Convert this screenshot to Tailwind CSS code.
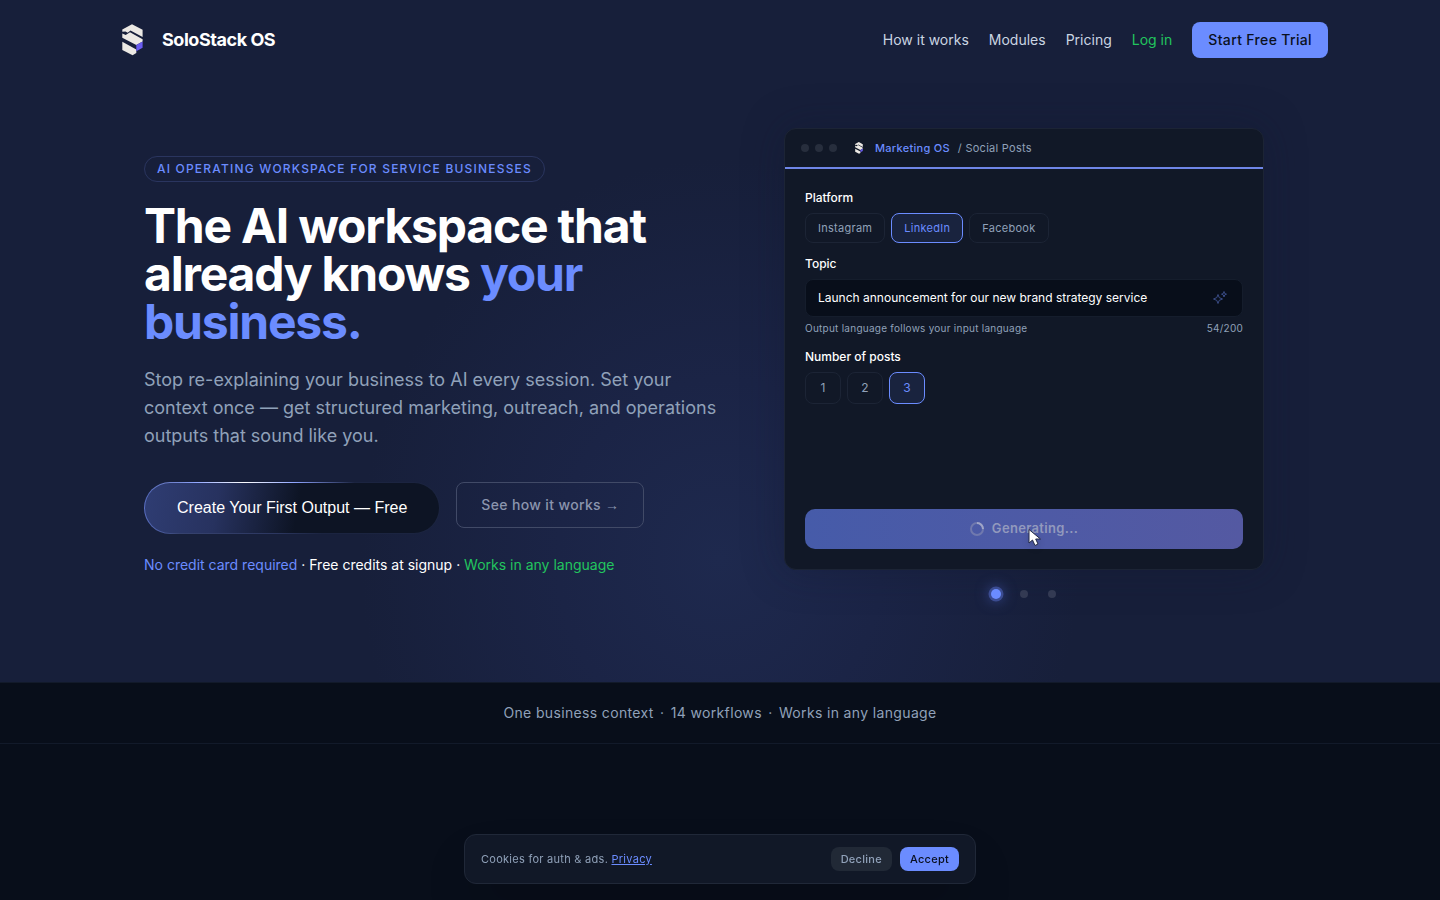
<!DOCTYPE html>
<html lang="en">
<head>
    <meta charset="UTF-8">
    <meta name="viewport" content="width=device-width, initial-scale=1.0">
    <title>SoloStack OS</title>
    <script src="https://cdn.jsdelivr.net/npm/@tailwindcss/browser@4"></script>
</head>
<body class="min-h-screen overflow-x-hidden bg-[#080e1a] font-['Inter',sans-serif] text-white">

<!-- logo, reused in the nav and in the demo window -->
<svg class="hidden" aria-hidden="true">
    <symbol id="logo" viewBox="0 0 21 32">
        <path fill="#ece9e4" d="M10 0.300 20.600 5.800V13L8.500 6.500 5.700 8.800 3.500 7.500 0.300 7.800V5.500Z"/>
        <path fill="#ece9e4" d="M0.300 9.500 3.700 11 8 8.300 20.600 15.300V17.500L14.300 21 0.300 13.700Z"/>
        <path fill="#ece9e4" d="M0.300 17.700 14.300 25.500V29L10.600 31.300 0.300 26Z"/>
        <path fill="#6a5cf0" d="M14.300 21 20.600 17.500V23.700L14.300 27.300Z"/>
    </symbol>
</svg>

<div class="bg-[#171f3a] bg-[radial-gradient(ellipse_360px_400px_at_50%_82%,#1e294e_0%,#1b2446_45%,#171f3a_100%)]">
    <header>
        <nav class="mx-auto flex h-20 max-w-7xl items-center justify-between px-8">
            <a href="#" class="flex items-center gap-2.5">
                <span class="flex w-10 justify-center"><svg class="h-8 w-[21px]"><use href="#logo"/></svg></span>
                <span class="text-lg font-bold tracking-tight">SoloStack OS</span>
            </a>
            <div class="flex items-center gap-5 text-sm text-slate-300">
                <a href="#how">How it works</a>
                <a href="#modules">Modules</a>
                <a href="#pricing">Pricing</a>
                <a href="#login" class="text-[#22c55e]">Log in</a>
                <a href="#trial" class="flex h-9 items-center rounded-lg bg-[#6b8cff] px-4 font-medium tracking-wide text-[#0a1020]">Start Free Trial</a>
            </div>
        </nav>
    </header>

    <main class="mx-auto grid max-w-[1200px] grid-cols-[36fr_34fr] items-center gap-8 px-6 pt-12 pb-20">
        <div>
            <p class="inline-flex h-[26px] items-center rounded-full border border-[#2a355f] px-3 text-xs font-medium tracking-widest text-[#6b8cff] uppercase">AI operating workspace for service businesses</p>
            <h1 class="mt-5 text-5xl leading-12 font-bold tracking-tight">The AI workspace that already knows <span class="text-[#6b8cff]">your business.</span></h1>
            <p class="mt-5 text-lg leading-7 text-slate-400">Stop re-explaining your business to AI every session. Set your context once — get structured marketing, outreach, and operations outputs that sound like you.</p>
            <div class="mt-8 flex items-start gap-4">
                <a href="#start" class="rounded-full bg-[radial-gradient(ellipse_110px_24px_at_34%_0%,#fff_0%,#8fa5ff_45%,transparent_100%),linear-gradient(90deg,#5a70c4_0%,#36426f_12%,#2c3760_45%,#1b2440_60%)] p-px font-['Liberation_Sans',sans-serif] text-base">
                    <span class="flex h-[50px] items-center rounded-full bg-[#0d1424] bg-[linear-gradient(100deg,#2f3d73_0%,#27325f_25%,#0d1424_52%)] px-8">Create Your First Output — Free</span>
                </a>
                <a href="#how" class="flex h-[46px] items-center rounded-lg border border-[#414a67] px-6 text-sm font-medium tracking-wide text-[#8b95ae]">See how it works&nbsp;<span class="font-['Liberation_Sans',sans-serif]">→</span></a>
            </div>
            <p class="mt-5 text-sm leading-[22px]"><span class="text-[#6b8cff]">No credit card required</span> · Free credits at signup · <span class="text-[#22c55e]">Works in any language</span></p>
        </div>

        <div class="flex flex-col items-center">
            <!-- demo window -->
            <div class="flex h-[442px] w-full max-w-[480px] flex-col overflow-hidden rounded-xl border border-[#1c2435] bg-[#111827] shadow-[0_0_40px_rgba(16,24,50,0.35)]">
                <div class="flex h-10 shrink-0 items-center border-b-2 border-[#6f86e8] px-4 text-[11px]">
                    <span class="flex gap-1.5">
                        <i class="size-2 rounded-full bg-[#272e3d]"></i>
                        <i class="size-2 rounded-full bg-[#272e3d]"></i>
                        <i class="size-2 rounded-full bg-[#272e3d]"></i>
                    </span>
                    <svg class="ml-[17px] h-3 w-2.5"><use href="#logo"/></svg>
                    <span class="ml-[11px] font-medium tracking-wide text-[#6b8cff]">Marketing OS</span>
                    <span class="ml-2 tracking-wide text-slate-400">/ Social Posts</span>
                </div>
                <form class="flex grow flex-col p-5">
                    <fieldset>
                        <legend class="text-xs leading-[18px] font-medium">Platform</legend>
                        <div class="mt-1.5 flex gap-1.5 text-[11px] tracking-wide text-slate-400">
                            <button type="button" class="h-[30px] rounded-lg border border-[#1c2435] px-3">Instagram</button>
                            <button type="button" class="h-[30px] rounded-lg border border-[#6b8cff] bg-[#19233e] px-3 text-[#6b8cff]">LinkedIn</button>
                            <button type="button" class="h-[30px] rounded-lg border border-[#1c2435] px-3">Facebook</button>
                        </div>
                    </fieldset>
                    <label for="topic" class="mt-3 text-xs leading-[18px] font-medium">Topic</label>
                    <div class="mt-1.5 flex h-[38px] items-center rounded-lg border border-[#151d2c] bg-[#080e1a] px-3">
                        <input id="topic" type="text" value="Launch announcement for our new brand strategy service" class="min-w-0 grow bg-transparent text-xs text-white outline-none">
                        <svg class="mr-0.5 size-4" viewBox="0 0 16 16" fill="none" stroke="#3a4c86" stroke-linejoin="round"><path d="M6 4.500 7.200 7.600 10.500 9 7.200 10.400 6 13.500 4.800 10.400 1.500 9 4.800 7.600ZM12 1.500 12.700 3.500 14.500 4.200 12.700 4.900 12 7 11.300 4.900 9.500 4.200 11.300 3.500Z"/></svg>
                    </div>
                    <div class="mt-1 flex justify-between text-[10px] leading-[15px] tracking-wide text-slate-400">
                        <span>Output language follows your input language</span>
                        <span>54/200</span>
                    </div>
                    <fieldset class="mt-3">
                        <legend class="text-xs leading-[18px] font-medium">Number of posts</legend>
                        <div class="mt-1.5 flex gap-1.5 text-xs text-slate-400">
                            <button type="button" class="h-8 w-9 rounded-lg border border-[#1c2435]">1</button>
                            <button type="button" class="h-8 w-9 rounded-lg border border-[#1c2435]">2</button>
                            <button type="button" class="h-8 w-9 rounded-lg border border-[#6b8cff] bg-[#19233e] text-[#6b8cff]">3</button>
                        </div>
                    </fieldset>
                    <button type="button" class="relative mt-auto flex h-10 shrink-0 items-center justify-center gap-2 rounded-[10px] bg-linear-to-r from-[#465ba9] to-[#5459a2] text-[13px] font-semibold tracking-wide text-[#9299bd]">
                        <svg class="size-3.5" viewBox="0 0 14 14" fill="none" stroke-width="2"><circle cx="7" cy="7" r="6" stroke="#7079ae"/><path stroke="#a0a6c8" d="M7 1a6 6 0 0 1 6 6"/></svg>
                        Generating...
                        <svg class="absolute top-5 left-1/2 ml-1 h-[18px] w-4 drop-shadow-md" viewBox="0 0 16 18"><path fill="#fff" stroke="#252b45" d="M1 0.500V14L4.500 11 7 16.500 10 15 7.700 10H12.500Z"/></svg>
                    </button>
                </form>
            </div>
            <div class="mt-4 flex h-4 items-center gap-5">
                <button type="button" aria-label="Slide 1" class="size-2 scale-125 rounded-full bg-[#6b8cff] shadow-[0_0_0_2px_#3b4c91,0_0_10px_2px_#34458a]"></button>
                <button type="button" aria-label="Slide 2" class="size-2 rounded-full bg-[#333a53]"></button>
                <button type="button" aria-label="Slide 3" class="size-2 rounded-full bg-[#333a53]"></button>
            </div>
        </div>
    </main>
</div>

<section class="border-y border-[#121a2a] py-[18px] text-center text-sm leading-6 tracking-wide text-slate-400">
    One business context <span class="mx-0.5">·</span> 14 workflows <span class="mx-0.5">·</span> Works in any language
</section>

<aside class="fixed inset-x-0 bottom-4 mx-auto flex h-[50px] max-w-[512px] items-center justify-between rounded-xl border border-[#202838] bg-[#111827] px-4 text-[11px] tracking-wide text-slate-400 shadow-2xl">
    <p>Cookies for auth &amp; ads. <a href="#privacy" class="text-[#6b8cff] underline">Privacy</a></p>
    <div class="flex gap-2 font-medium">
        <button type="button" class="h-6 rounded-lg bg-[#212936] px-2.5">Decline</button>
        <button type="button" class="h-6 rounded-lg bg-[#6b8cff] px-2.5 text-[#0a1020]">Accept</button>
    </div>
</aside>
</body>
</html>
